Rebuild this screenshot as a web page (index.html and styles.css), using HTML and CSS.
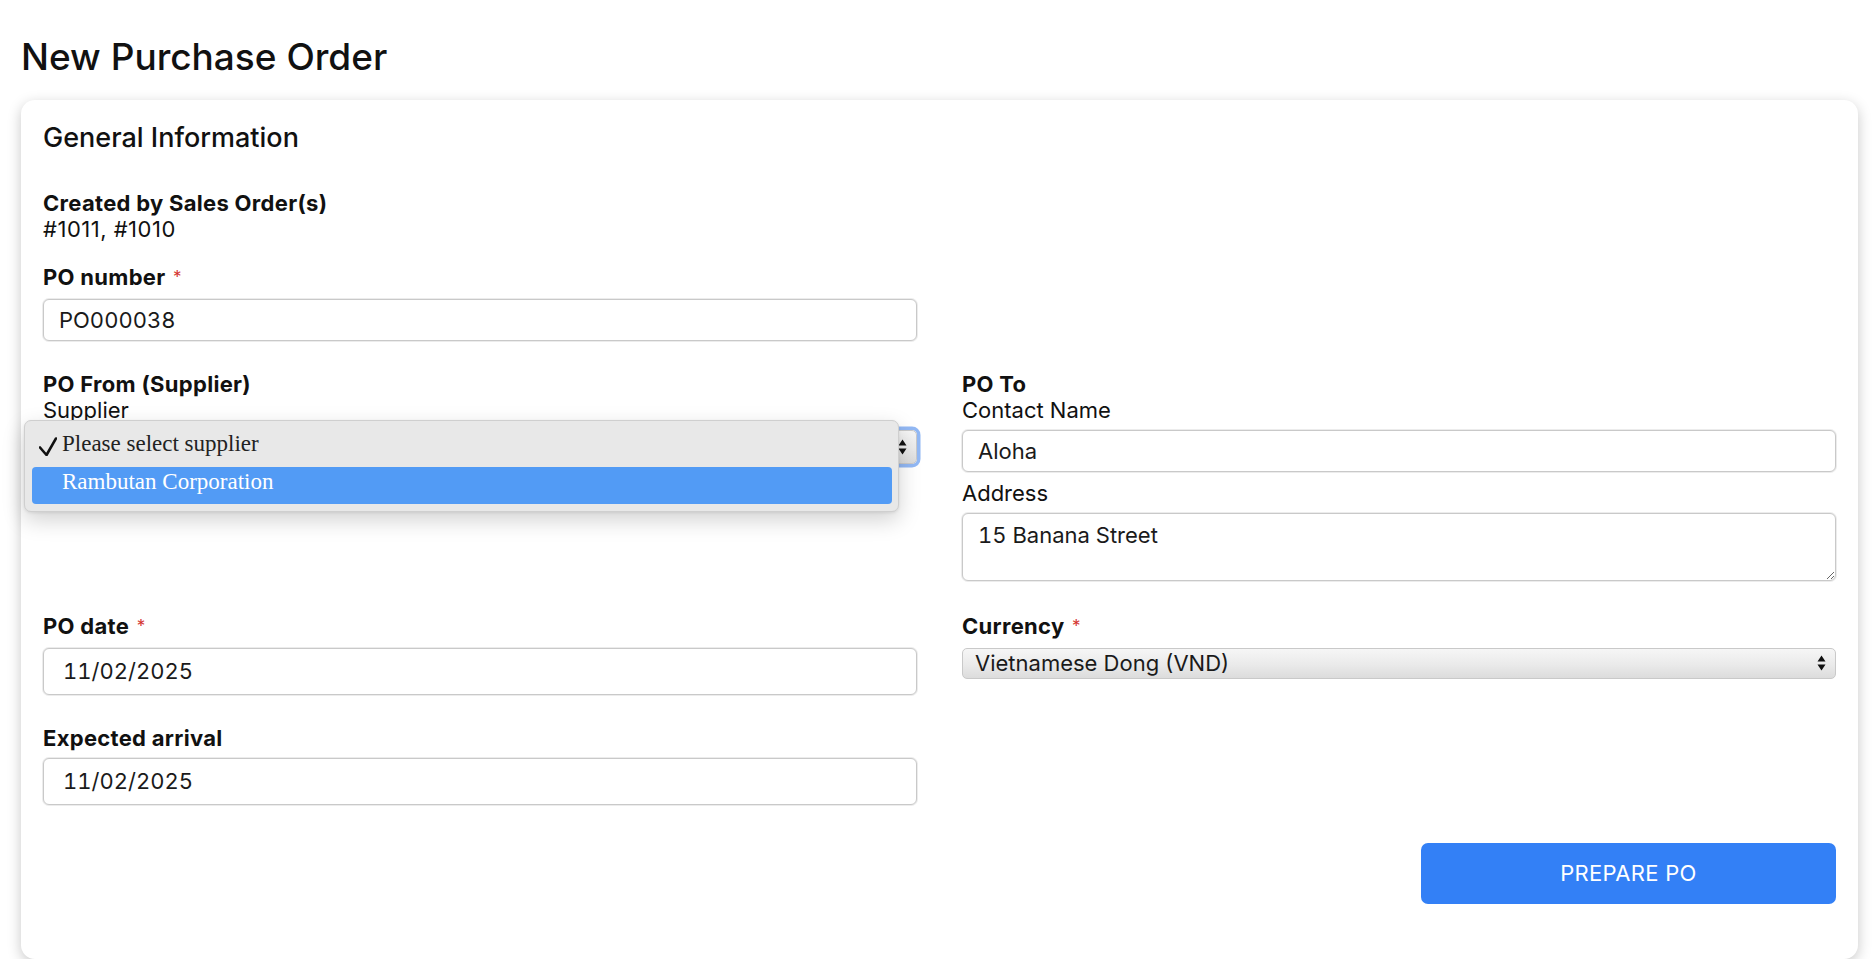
FILE: index.html
```html
<!DOCTYPE html>
<html lang="en">
<head>
<meta charset="utf-8">
<title>New Purchase Order</title>
<link rel="stylesheet" href="styles.css">
</head>
<body>
<main class="page">
  <h1 class="page-title">New Purchase Order</h1>
  <section class="card">
    <h2 class="card-title">General Information</h2>

    <div class="intro">
      <div class="info">
        <div class="field-label">Created by Sales Order(s)</div>
        <div class="info-text">#1011, #1010</div>
      </div>
      <div class="intro-empty"></div>
      <div class="field">
        <label class="field-label">PO number <span class="req">*</span></label>
        <input class="input" type="text" value="PO000038">
      </div>
    </div>

    <div class="form-grid">
      <div class="field">
        <div class="field-label">PO From (Supplier)</div>
        <div class="sub-label">Supplier</div>
        <div class="select-wrap">
          <div class="select select-focused">
            <span class="select-text select-text-hidden">Please select supplier</span>
            <svg class="select-arrows" width="9" height="18" viewBox="0 0 9 18"><path d="M4.5 1.5 L8.5 7.5 L0.5 7.5 Z M0.5 10.5 L8.5 10.5 L4.5 16.5 Z" fill="#111"/></svg>
          </div>
          <ul class="popup">
            <li class="popup-item">
              <svg class="popup-check" width="18" height="19" viewBox="0 0 18 19"><path d="M1 10.5 L7.5 18 L17 1.5" fill="none" stroke="#111" stroke-width="2.6" stroke-linecap="round" stroke-linejoin="round"/></svg>
              Please select supplier
            </li>
            <li class="popup-item popup-item-active">Rambutan Corporation</li>
          </ul>
        </div>
      </div>

      <div class="field field-contact">
        <div class="field-label">PO To</div>
        <div class="sub-label">Contact Name</div>
        <input class="input" type="text" value="Aloha">
        <div class="sub-label sub-label-gap">Address</div>
        <textarea class="textarea">15 Banana Street</textarea>
      </div>

      <div class="field">
        <label class="field-label">PO date <span class="req">*</span></label>
        <input class="input input-date" type="text" value="11/02/2025">
      </div>

      <div class="field">
        <label class="field-label">Currency <span class="req">*</span></label>
        <div class="select select-currency">
          <span class="select-text">Vietnamese Dong (VND)</span>
          <svg class="select-arrows" width="9" height="18" viewBox="0 0 9 18"><path d="M4.5 1.5 L8.5 7.5 L0.5 7.5 Z M0.5 10.5 L8.5 10.5 L4.5 16.5 Z" fill="#111"/></svg>
        </div>
      </div>

      <div class="field">
        <label class="field-label">Expected arrival</label>
        <input class="input input-date" type="text" value="11/02/2025">
      </div>
      <div></div>
    </div>

    <div class="actions">
      <button class="btn-primary" type="button">PREPARE PO</button>
    </div>
  </section>
</main>
</body>
</html>
```

FILE: styles.css
```css
* {
  box-sizing: border-box;
}

html,
body {
  margin: 0;
  background: #ffffff;
}

body {
  font-family: Inter, "Liberation Sans", Arial, sans-serif;
  color: #111111;
}

.page {
  padding: 35px 14px 0 21px;
}

.page-title {
  margin: 0 0 22px;
  font-size: 37px;
  line-height: 43px;
  font-weight: 500;
}

.card {
  background: #ffffff;
  border-radius: 14px;
  box-shadow: 0 4px 14px rgba(0, 0, 0, 0.22);
  padding: 21px 22px 55px;
}

.card-title {
  margin: 0;
  font-size: 27px;
  line-height: 34px;
  font-weight: 500;
}

.intro {
  margin-top: 35px;
  display: grid;
  grid-template-columns: 1fr 1fr;
  column-gap: 45px;
  row-gap: 22px;
}

.form-grid {
  margin-top: 30px;
  display: grid;
  grid-template-columns: 1fr 1fr;
  column-gap: 45px;
  row-gap: 30px;
}

.field {
  display: flex;
  flex-direction: column;
}

.field-contact {
  padding-bottom: 2px;
}

.field-label {
  font-size: 22px;
  line-height: 26px;
  font-weight: 700;
  letter-spacing: 0.3px;
}

.info-text,
.sub-label {
  font-size: 22px;
  line-height: 26px;
  font-weight: 400;
}

.info-text {
  letter-spacing: 0.5px;
}

.sub-label-gap {
  margin-top: 8px;
}

.req {
  color: #d4332f;
  font-size: 17px;
  font-weight: 400;
  position: relative;
  top: -2px;
  margin-left: 2px;
}

.input,
.textarea {
  margin-top: 7px;
  width: 100%;
  font-family: inherit;
  font-variant-numeric: tabular-nums;
  font-size: 22px;
  color: #1a1a1a;
  background: #ffffff;
  border: 1px solid #c9c9c9;
  border-radius: 6px;
  box-shadow: 0 0 0 1px #ececec;
  padding: 0 15px;
  outline: none;
}

.input {
  height: 42px;
}

.input-date {
  height: 47px;
  padding-left: 19px;
}

.textarea {
  height: 67.5px;
  padding: 8px 15px;
  line-height: 26px;
  display: block;
  resize: both;
}

.select-wrap {
  position: relative;
  margin-top: 7px;
}

.select {
  position: relative;
  display: flex;
  align-items: center;
  height: 33.5px;
  padding: 0 30px 0 12px;
  border: 1px solid #c9c9c9;
  border-radius: 5px;
  background: linear-gradient(#f6f6f6, #eaeaea 55%, #dcdcdc);
  font-size: 22px;
  color: #1a1a1a;
}

.select-currency {
  margin-top: 7px;
  height: 31px;
}

.select-focused {
  box-shadow: 0 0 0 3.5px rgba(110, 160, 240, 0.75);
}

.select-text {
  white-space: nowrap;
}

.select-text-hidden {
  visibility: hidden;
}

.select-arrows {
  position: absolute;
  right: 9px;
  top: 50%;
  margin-top: -9px;
}

.popup {
  position: absolute;
  left: -19px;
  right: 18px;
  top: -10px;
  margin: 0;
  list-style: none;
  padding: 8px 6.5px 7px;
  background: #e8e8e8;
  border: 1px solid #cfcfcf;
  border-radius: 7px;
  box-shadow: 0 8px 22px rgba(0, 0, 0, 0.18), 0 1px 3px rgba(0, 0, 0, 0.08);
  z-index: 10;
}

.popup-item {
  position: relative;
  height: 37.5px;
  line-height: 30px;
  padding: 0 0 0 30.5px;
  font-family: "Liberation Serif", "Times New Roman", serif;
  font-size: 23px;
  color: #222222;
  border-radius: 4px;
  white-space: nowrap;
}

.popup-item-active {
  background: #529bf5;
  color: #ffffff;
}

.popup-check {
  position: absolute;
  left: 7px;
  top: 8px;
}

.actions {
  display: flex;
  justify-content: flex-end;
  margin-top: 38px;
}

.btn-primary {
  width: 415px;
  height: 61px;
  border: none;
  border-radius: 7px;
  background: #3380f6;
  color: #ffffff;
  font-family: inherit;
  font-size: 22px;
  font-weight: 400;
  letter-spacing: 0.3px;
}
```
